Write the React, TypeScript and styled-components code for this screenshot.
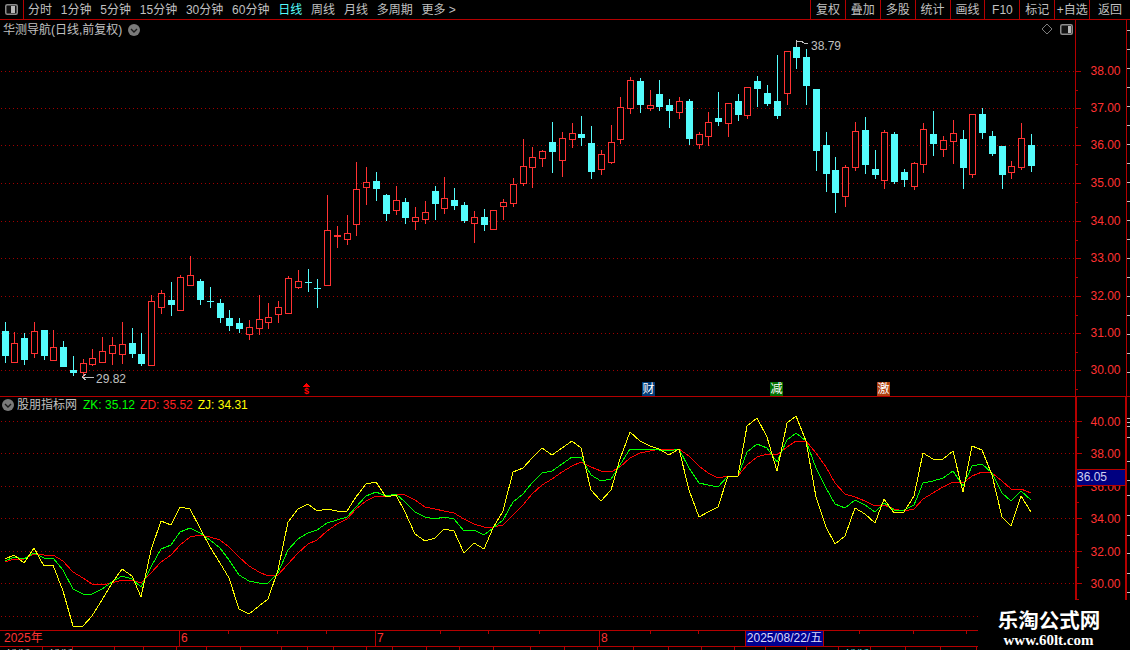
import React from 'react';
import styled, { createGlobalStyle } from 'styled-components';

const FONT = `"Liberation Sans", "Noto Sans CJK SC", sans-serif`;
const LINE = '#b40000';

const Global = createGlobalStyle`
  html, body { margin: 0; padding: 0; background: #000; }
  #root { width: 1130px; height: 650px; }
`;

const Screen = styled.div`
  position: relative;
  display: flex;
  flex-direction: column;
  width: 1130px;
  height: 650px;
  overflow: hidden;
  background: #000;
  font: 12px/16px ${FONT};
  color: #c0c0c0;
`;

const Toolbar = styled.header`
  display: flex;
  align-items: stretch;
  flex: none;
  height: 20px;
  box-sizing: border-box;
  border-bottom: 1px solid ${LINE};
`;
const ToggleCell = styled.div`
  display: flex;
  align-items: center;
  justify-content: center;
  width: 24px;
  box-sizing: border-box;
  border-right: 1px solid ${LINE};
`;
const Periods = styled.nav`
  display: flex;
  align-items: center;
  gap: 8.8px;
  padding-left: 4px;
  flex: 1;
`;
const Period = styled.span<{ $active?: boolean }>`
  color: ${(p) => (p.$active ? '#54fcfc' : '#c0c0c0')};
  white-space: nowrap;
`;
const Tools = styled.div`
  display: flex;
  width: 320px;
  flex: none;
`;
const Tool = styled.span`
  display: flex;
  align-items: center;
  justify-content: center;
  flex: 1 1 35px;
  box-sizing: border-box;
  border-left: 1px solid ${LINE};
  white-space: nowrap;
  &:last-child { flex: 1 1 41px; }
`;

const Pane = styled.section<{ $h: number; $strong?: boolean }>`
  position: relative;
  display: flex;
  flex: none;
  height: ${(p) => p.$h}px;
  box-sizing: border-box;
  border-bottom: ${(p) => (p.$strong ? `1px solid ${LINE}` : 'none')};
`;
const Plot = styled.div`
  width: 1075px;
  flex: none;
  line-height: 0;
`;
const AxisBox = styled.div<{ $w: number }>`
  width: 52px;
  flex: none;
  box-sizing: border-box;
  border-left: ${(p) => p.$w}px solid ${LINE};
  border-right: ${(p) => p.$w}px solid ${LINE};
  line-height: 0;
  overflow: hidden;
`;
const Rail = styled.div`
  flex: 1;
  line-height: 0;
`;
const Crisp = styled.svg`
  display: block;
  shape-rendering: crispEdges;
`;
const AxisText = styled.text`
  font: 12px ${FONT};
  fill: #ff3232;
`;
const NoteText = styled.text`
  font: 12px ${FONT};
  fill: #c0c0c0;
`;
const MarkGlyph = styled.text`
  font: 700 9px ${FONT};
  fill: #ff0000;
`;

const Caption = styled.div`
  position: absolute;
  left: 3px;
  top: 1px;
  display: flex;
  align-items: center;
  gap: 6px;
  height: 18px;
  white-space: nowrap;
`;
const PaneTools = styled.div`
  position: absolute;
  left: 1041px;
  top: 3px;
  display: flex;
  align-items: center;
  gap: 7px;
`;
const Readout = styled.div`
  position: absolute;
  left: 2px;
  top: 0;
  display: flex;
  align-items: center;
  height: 16px;
  white-space: nowrap;
`;
const IndicatorName = styled.span`
  margin: 0 6px 0 3px;
`;
const Value = styled.span<{ $c: string }>`
  color: ${(p) => p.$c};
  margin-right: 5px;
`;
const Signal = styled.span<{ $x: number; $bg: string }>`
  position: absolute;
  left: ${(p) => p.$x}px;
  top: 362px;
  width: 13px;
  height: 14px;
  background: ${(p) => p.$bg};
  color: #fff;
  font-size: 12px;
  line-height: 14px;
  text-align: center;
`;
const PriceTag = styled.div`
  position: absolute;
  left: 1077px;
  top: 72px;
  width: 48px;
  height: 17px;
  box-sizing: border-box;
  border-top: 1px solid ${LINE};
  border-bottom: 1px solid ${LINE};
  background: #000080;
  color: #d0d0f0;
  line-height: 15px;
`;

const TimeBar = styled.div`
  position: relative;
  display: flex;
  width: 978px;
  height: 17px;
  flex: none;
  box-sizing: border-box;
  border-top: 1px solid ${LINE};
  border-bottom: 1px solid ${LINE};
  color: #ff3232;
`;
const Month = styled.span<{ $w: number }>`
  width: ${(p) => p.$w}px;
  flex: none;
  box-sizing: border-box;
  padding-left: 1px;
  line-height: 15px;
  & + & { border-left: 1px solid ${LINE}; }
  &:first-child { padding-left: 4px; }
`;
const Ticks = styled.svg`
  position: absolute;
  inset: 0;
  shape-rendering: crispEdges;
`;
const DateTag = styled.span`
  position: absolute;
  left: 745px;
  top: -1px;
  width: 79px;
  height: 17px;
  box-sizing: border-box;
  border: 1px solid ${LINE};
  background: #000090;
  color: #d8d8f8;
  line-height: 15px;
  text-align: center;
  white-space: nowrap;
`;
const Status = styled.div`
  display: flex;
  width: 978px;
  height: 3px;
  flex: none;
  overflow: hidden;
`;
const StatusCell = styled.span<{ $w: number; $c?: string }>`
  width: ${(p) => p.$w}px;
  flex: none;
  box-sizing: border-box;
  border-right: 1px solid ${LINE};
  padding: 2px 0 0 6px;
  color: ${(p) => p.$c || '#e0e0e0'};
  font-size: 12px;
  line-height: 14px;
  overflow: hidden;
  white-space: nowrap;
`;
const Watermark = styled.aside`
  position: absolute;
  left: 978px;
  top: 600px;
  width: 152px;
  height: 50px;
  background: #000;
  color: #fff;
  text-align: center;
`;
const MarkTitle = styled.div`
  margin: 7px 0 0 -10px;
  font: 700 20.5px/24px "Noto Sans CJK SC", sans-serif;
`;
const MarkUrl = styled.div`
  margin: 1px 0 0 -11px;
  font: 700 15px/16px "Liberation Serif", serif;
`;

type C = [number, number, number, number, 0 | 1];
const A: C[] = [
  [576,603,678,698,0],[606,640,695,698,1],[610,625,690,705,0],[576,604,668,684,1],[600,600,678,690,0],[600,652,689,689,1],
  [633,651,711,711,0],[678,720,729,738,0],[687,700,725,745,1],[657,685,701,708,1],[621,664,695,695,1],[621,646,668,705,1],
  [576,643,671,702,1],[594,640,672,684,0],[609,672,702,708,0],[495,514,704,704,1],[480,490,532,552,1],[456,510,525,558,0],
  [435,442,539,539,1],[378,436,464,464,1],[447,453,510,525,0],[471,513,516,534,0],[507,519,564,579,0],[540,564,588,603,0],
  [564,579,597,609,0],[570,592,611,630,1],[495,568,593,615,1],[519,562,575,597,1],[513,532,551,579,1],[438,445,548,552,1],
  [420,454,470,477,1],[417,456,458,486,0],[447,474,477,534,0],[195,301,464,464,1],[288,316,320,354,1],[255,310,326,345,1],
  [96,178,281,318,1],[111,157,170,225,1],[126,153,177,213,0],[192,195,252,273,0],[168,211,239,255,1],[204,216,264,282,0],
  [231,262,272,300,1],[213,247,266,282,1],[168,183,222,270,0],[141,205,233,252,1],[174,210,228,240,0],[216,225,273,279,0],
  [243,262,278,339,1],[237,261,285,303,0],[240,241,296,296,1],[207,217,227,270,1],[144,163,218,231,1],[27,109,158,168,1],
];
const B: C[] = [
  [321,352,380,444,1],[330,334,353,381,1],[246,306,336,399,0],[276,295,359,411,1],[249,280,296,324,1],[228,282,294,318,0],
  [258,309,396,417,0],[330,343,387,405,1],[255,307,365,372,1],[171,202,296,312,1],[111,121,203,222,1],[114,123,195,219,0],
  [150,196,203,213,1],[120,162,201,213,0],[177,195,213,264,0],[171,184,215,237,1],[177,183,297,315,0],[276,283,311,327,1],
  [216,247,287,318,1],[156,234,246,258,0],[189,190,248,291,1],[162,183,225,243,0],[141,142,224,237,1],[108,123,147,201,0],
  [135,159,192,198,0],[45,183,228,237,0],[33,34,158,195,1],[3,21,54,87,0],[27,51,138,195,0],[147,147,333,393,0],
  [276,315,402,456,0],[351,390,459,519,0],[375,382,467,501,1],[246,274,380,393,1],[231,270,375,402,0],[330,387,405,417,0],
  [270,277,419,447,1],[276,282,426,432,0],[387,396,420,441,0],[366,370,437,450,1],[249,268,371,399,1],[213,282,312,348,0],
  [288,301,326,351,1],[240,280,302,372,1],[270,297,384,447,0],[222,223,401,414,1],[204,222,279,297,0],[273,288,342,348,0],
  [318,318,405,447,0],[363,379,395,417,1],[249,295,380,390,1],[282,315,378,396,0],
];
const conv = (a: C[], y0: number): C[] => a.map(([w, t, b, l, d]) => [y0 + w / 3, y0 + t / 3, y0 + b / 3, y0 + l / 3, d]);
const candles = [...conv(A, 130), ...conv(B, 40)];
const cx = (i: number) => Math.round(4.5 + 9.776 * i);

const yellow = [447,434,460,415,469,466,543,649,649,618,570,520,478,498,562,420,333,346,292,296,355,410,459,505,597,611,589,568,480,335,297,283,304,298,303,303,262,223,216,262,255,307,373,394,385,358,362,430,400,418,355,303,187,175,145,
  115,136,113,94,113,240,274,240,148,67,93,108,118,136,116,240,322,307,291,198,198,48,25,80,184,40,19,94,260,350,403,378,295,312,340,268,310,306,257,130,148,148,124,247,109,121,196,322,348,259,307];
const green = [452,441,446,430,445,445,480,537,552,552,537,515,498,507,532,470,418,405,366,355,370,390,415,450,494,512,520,520,490,420,388,368,360,340,330,322,290,258,247,258,253,275,307,322,328,322,327,364,361,376,355,330,275,252,220,
  189,183,163,142,142,195,214,207,165,118,118,118,121,124,116,175,218,226,232,198,198,125,103,115,156,90,70,94,175,235,283,295,271,286,307,280,300,301,285,220,214,205,184,228,169,163,188,250,274,244,269];
const red = [456,446,446,432,436,436,452,485,505,521,526,520,511,511,519,490,455,435,405,381,376,380,390,410,442,468,485,497,494,463,430,403,390,362,342,328,298,272,259,257,251,256,270,290,298,303,310,328,341,352,352,344,315,285,253,
  225,207,187,168,156,172,183,187,170,143,130,123,118,118,116,138,168,190,203,197,197,165,140,132,135,110,94,94,130,170,220,253,260,273,289,284,297,302,298,266,250,232,215,220,197,187,190,214,238,238,250];
const pts = (s: number[]) => s.map((z, i) => `${cx(i)},${Math.round(410 + z / 3)}`).join(' ');

const mainLevels: [number, string][] = [[71,'38.00'],[108,'37.00'],[145,'36.00'],[183,'35.00'],[221,'34.00'],[258,'33.00'],[296,'32.00'],[333,'31.00'],[370,'30.00']];
const subLevels: [number, string][] = [[421,'40.00'],[453,'38.00'],[486,'36.00'],[518,'34.00'],[551,'32.00'],[583,'30.00']];

const Grid = ({ ys }: { ys: number[] }) => (
  <>
    {ys.map((y) => (
      <line key={y} x1={1} x2={1075} y1={y + 0.5} y2={y + 0.5} stroke="#a00000" strokeDasharray="1 3" />
    ))}
  </>
);

const Candle = ({ c, i }: { c: C; i: number }) => {
  const [w, t, b, l, up] = c;
  const x = cx(i);
  const top = Math.round(t);
  const bot = Math.round(b);
  const col = up ? '#ff3232' : '#54fcfc';
  const doji = bot - top <= 2;
  return (
    <g>
      {up ? (
        <>
          <line x1={x + 0.5} x2={x + 0.5} y1={Math.round(w)} y2={top} stroke={col} />
          <line x1={x + 0.5} x2={x + 0.5} y1={bot} y2={Math.round(l)} stroke={col} />
          {doji ? (
            <rect x={x - 3} y={top} width={7} height={2} fill={col} />
          ) : (
            <rect x={x - 2.5} y={top + 0.5} width={6} height={bot - top} fill="#000" stroke={col} />
          )}
        </>
      ) : (
        <>
          <line x1={x + 0.5} x2={x + 0.5} y1={Math.round(w)} y2={Math.round(l)} stroke={col} />
          <rect x={x - 3} y={top} width={7} height={Math.max(bot - top, 1)} fill={col} />
        </>
      )}
    </g>
  );
};

const ToggleIcon = ({ wide }: { wide?: boolean }) => (
  <svg width="13" height="11" viewBox="0 0 13 11">
    <rect x="0.75" y="0.75" width="11.5" height="9.5" rx="1.5" fill="#111" stroke="#8c8c8c" strokeWidth="1.5" />
    <rect x={wide ? 6 : 8} y="2" width={wide ? 4 : 3} height="7" fill="#b8b8b8" />
  </svg>
);
const Chevron = () => (
  <svg width="12" height="12" viewBox="0 0 12 12">
    <circle cx="6" cy="6" r="6" fill="#7a7a7a" />
    <path d="M3 5l3 3 3-3" fill="none" stroke="#1a1a1a" strokeWidth="1.4" />
  </svg>
);
const Diamond = () => (
  <svg width="12" height="12" viewBox="0 0 12 12">
    <path d="M6 1l5 5-5 5-5-5z" fill="none" stroke="#7d7d7d" />
  </svg>
);

const periods = ['分时', '1分钟', '5分钟', '15分钟', '30分钟', '60分钟', '日线', '周线', '月线', '多周期', '更多 >'];
const tools = ['复权', '叠加', '多股', '统计', '画线', 'F10', '标记', '+自选', '返回'];
const cells = [43,30,42,29,33,30,34,41,26,26,33,26,34,33,34,37,34,33,36,35,33,33,31,41,32,32,35,35,36,35];

export default function App() {
  const rightTicksMain = Array.from({ length: 19 }, (_, i) => 10 + i * 19);
  const rightTicksSub = [21, 25, 29, 40, 64, 83, 98, 118, 138, 156, 176, 195];
  return (
    <Screen>
      <Global />
      <Toolbar>
        <ToggleCell><ToggleIcon wide /></ToggleCell>
        <Periods>
          {periods.map((p) => (
            <Period key={p} $active={p === '日线'}>{p}</Period>
          ))}
        </Periods>
        <Tools>
          {tools.map((t) => (
            <Tool key={t}>{t}</Tool>
          ))}
        </Tools>
      </Toolbar>

      <Pane $h={377} $strong>
        <Plot>
          <Crisp width={1075} height={376} viewBox="0 20 1075 376">
            <Grid ys={mainLevels.map((l) => l[0])} />
            {candles.map((c, i) => (
              <Candle key={i} c={c} i={i} />
            ))}
            <path d="M82 377h12M82 377l4-3M82 377l4 3" fill="none" stroke="#c0c0c0" />
            <NoteText x={96} y={383}>29.82</NoteText>
            <path d="M796.5 40v7M797 41h4l3 2 4 1" fill="none" stroke="#c0c0c0" />
            <NoteText x={811} y={50}>38.79</NoteText>
            <path d="M304 386.5h5l-2.5-2.5z" stroke="#ff0000" fill="#ff0000" />
            <MarkGlyph x={304} y={394}>$</MarkGlyph>
          </Crisp>
        </Plot>
        <AxisBox $w={1}>
          <Crisp width={50} height={376} viewBox="0 20 50 376">
            {mainLevels.map(([y, t]) => (
              <g key={t}>
                <line x1={0} x2={5} y1={y + 0.5} y2={y + 0.5} stroke={LINE} />
                <line x1={0} x2={2} y1={y + 19.5} y2={y + 19.5} stroke={LINE} />
                <AxisText x={14.5} y={y + 4}>{t}</AxisText>
              </g>
            ))}
          </Crisp>
        </AxisBox>
        <Rail>
          <Crisp width={3} height={376}>
            {rightTicksMain.map((y) => (
              <line key={y} x1={0} x2={3} y1={y + 0.5} y2={y + 0.5} stroke="#c0c0c0" />
            ))}
          </Crisp>
        </Rail>
        <Caption>
          <span>华测导航(日线,前复权)</span>
          <Chevron />
        </Caption>
        <PaneTools>
          <Diamond />
          <ToggleIcon />
        </PaneTools>
        <Signal $x={642} $bg="#003c78">财</Signal>
        <Signal $x={770} $bg="#007000">减</Signal>
        <Signal $x={877} $bg="#b04010">激</Signal>
      </Pane>

      <Pane $h={233}>
        <Plot>
          <Crisp width={1075} height={233} viewBox="0 397 1075 233">
            <Grid ys={[421, 453, 486, 518, 551, 583, 616]} />
            <polyline points={pts(red)} fill="none" stroke="#ff0000" />
            <polyline points={pts(green)} fill="none" stroke="#00ff00" />
            <polyline points={pts(yellow)} fill="none" stroke="#ffff00" />
          </Crisp>
        </Plot>
        <AxisBox $w={2}>
          <Crisp width={48} height={233} viewBox="0 397 48 233">
            {subLevels.map(([y, t]) => (
              <g key={t}>
                <line x1={0} x2={5} y1={y + 0.5} y2={y + 0.5} stroke={LINE} />
                <line x1={0} x2={2} y1={y + 16.5} y2={y + 16.5} stroke={LINE} />
                <AxisText x={13.5} y={y + 5}>{t}</AxisText>
              </g>
            ))}
          </Crisp>
        </AxisBox>
        <Rail>
          <Crisp width={3} height={233}>
            {rightTicksSub.map((y) => (
              <line key={y} x1={0} x2={3} y1={y + 0.5} y2={y + 0.5} stroke="#c0c0c0" />
            ))}
          </Crisp>
        </Rail>
        <Readout>
          <Chevron />
          <IndicatorName>股朋指标网</IndicatorName>
          <Value $c="#00ff00">ZK: 35.12</Value>
          <Value $c="#ff2020">ZD: 35.52</Value>
          <Value $c="#ffff00">ZJ: 34.31</Value>
        </Readout>
        <PriceTag>36.05</PriceTag>
      </Pane>

      <TimeBar>
        <Month $w={179}>2025年</Month>
        <Month $w={196}>6</Month>
        <Month $w={224}>7</Month>
        <Month $w={379}>8</Month>
        <Ticks width={978} height={3}>
          {[228, 277, 326, 440, 488, 539, 650, 698, 859, 913, 966].map((x) => (
            <line key={x} x1={x + 0.5} x2={x + 0.5} y1={0} y2={3} stroke={LINE} />
          ))}
        </Ticks>
        <DateTag>2025/08/22/五</DateTag>
      </TimeBar>
      <Status>
        {cells.map((w, i) => (
          <StatusCell key={i} $w={w} $c={i === 25 ? '#54fcfc' : undefined}>
            {i < 2 || i === 25 ? '排版' : ''}
          </StatusCell>
        ))}
      </Status>

      <Watermark>
        <MarkTitle>乐淘公式网</MarkTitle>
        <MarkUrl>www.60lt.com</MarkUrl>
      </Watermark>
    </Screen>
  );
}
